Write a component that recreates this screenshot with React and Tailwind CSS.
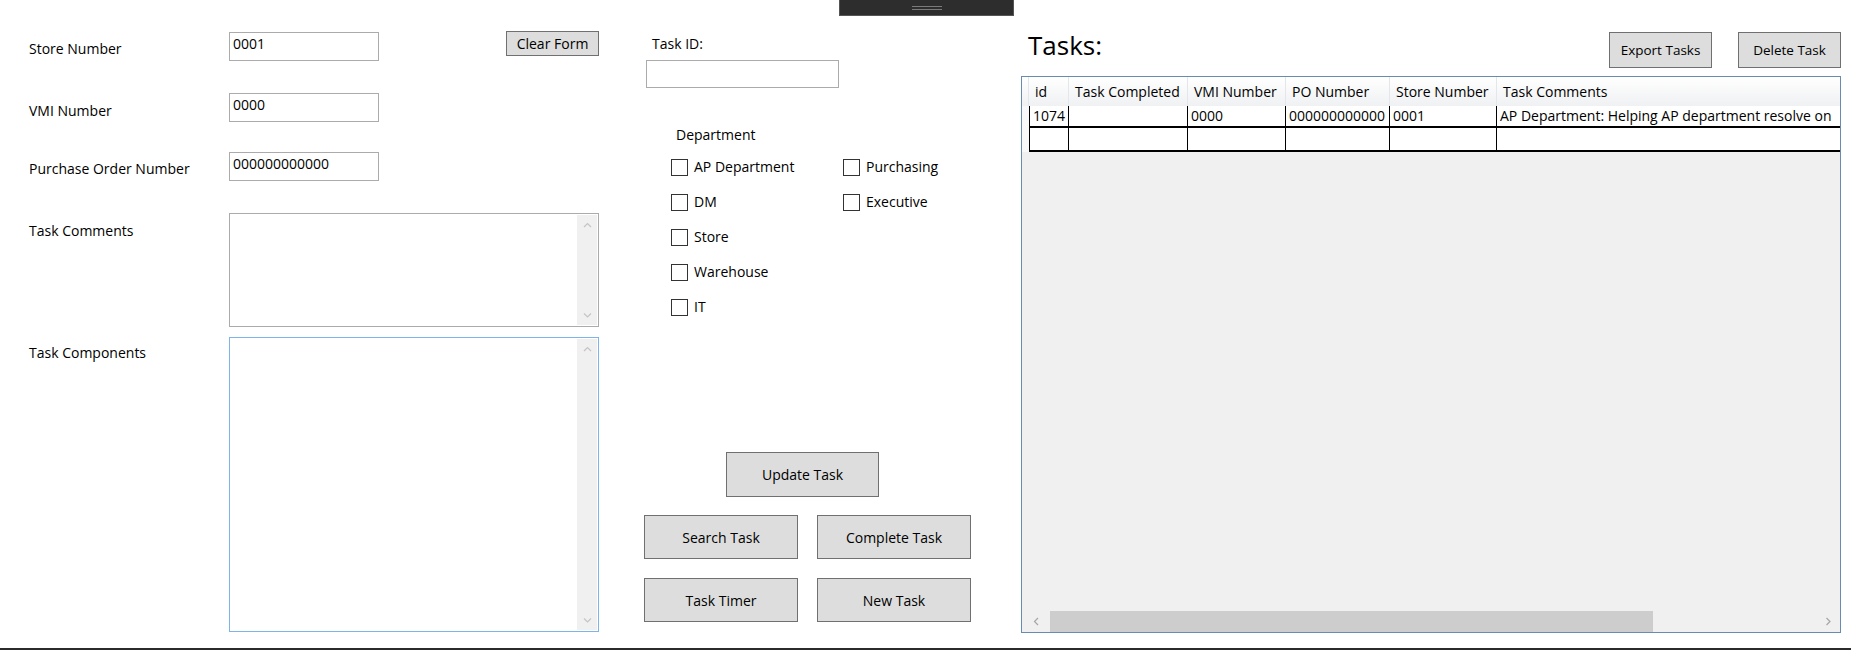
const font = { fontFamily: '"Open Sans", "Noto Sans", sans-serif' }

const Chevron = ({ dir, color = "#c4c4c4" }) => {
    const d = {
        up: "M1 5 L4.5 1.5 L8 5",
        down: "M1 1.5 L4.5 5 L8 1.5",
        left: "M5 1 L1.5 4.5 L5 8",
        right: "M1.5 1 L5 4.5 L1.5 8",
    }[dir]
    const vert = dir === "up" || dir === "down"
    return (
        <svg width={vert ? 9 : 7} height={vert ? 7 : 9} viewBox={vert ? "0 0 9 7" : "0 0 7 9"}>
            <path d={d} fill="none" stroke={color} strokeWidth="1.2" />
        </svg>
    )
}

const TextArea = ({ height, focused }) => (
    <div
        className={`w-[370px] ${height} border ${
            focused ? "border-[#7eb4ea]" : "border-[#ababab]"
        } bg-white flex justify-end p-px`}
    >
        <div className="w-[20px] h-full bg-[#f0f0f0] flex flex-col justify-between">
            <div className="h-[20px] flex items-center justify-center">
                <Chevron dir="up" />
            </div>
            <div className="h-[20px] flex items-center justify-center">
                <Chevron dir="down" />
            </div>
        </div>
    </div>
)

const Input = ({ value, className = "" }) => (
    <div className={`border border-[#ababab] bg-white pl-[3px] pt-[2px] text-[14px] leading-[18px] ${className}`}>
        {value}
    </div>
)

const Button = ({ children, className = "" }) => (
    <button className={`bg-[#dddddd] border border-[#707070] text-black flex items-center justify-center ${className}`}>
        {children}
    </button>
)

const Check = ({ label }) => (
    <div className="flex items-center h-[18px]">
        <div className="w-[17px] h-[17px] border border-[#333333] bg-white"></div>
        <span className="ml-[6px] text-[14px] leading-[18px]">{label}</span>
    </div>
)

const columns = [
    { name: "id", w: "w-[40px]", v: "1074" },
    { name: "Task Completed", w: "w-[119px]", v: "" },
    { name: "VMI Number", w: "w-[98px]", v: "0000" },
    { name: "PO Number", w: "w-[104px]", v: "000000000000" },
    { name: "Store Number", w: "w-[107px]", v: "0001" },
]

const TaskGrid = () => (
    <div className="mt-[8px] h-[557px] border border-[#688caf] bg-[#f0f0f0] flex flex-col overflow-hidden">
        <div className="flex h-[29px] shrink-0 bg-gradient-to-b from-white to-[#f0f1f3] text-[14px] leading-[29px]">
            <div className="w-[7px] shrink-0 border-r border-[#e3e6ea]"></div>
            {columns.map((c) => (
                <div key={c.name} className={`${c.w} shrink-0 border-r border-[#e3e6ea] pl-[6px] whitespace-nowrap`}>
                    {c.name}
                </div>
            ))}
            <div className="flex-1 min-w-0 pl-[6px] whitespace-nowrap">Task Comments</div>
        </div>
        {[0, 1].map((r) => (
            <div key={r} className={`flex shrink-0 ${r === 0 ? "h-[22px]" : "h-[24px]"}`}>
                <div className="w-[7px] shrink-0 bg-[#f9f9f9]"></div>
                <div className="flex-1 min-w-0 flex bg-white border-l border-black border-b-2 border-b-black text-[14px] leading-[20px]">
                    {columns.map((c) => (
                        <div
                            key={c.name}
                            className={`${c.name === "id" ? "w-[39px]" : c.w} shrink-0 border-r border-black pl-[3px] whitespace-nowrap`}
                        >
                            {r === 0 ? c.v : ""}
                        </div>
                    ))}
                    <div className="flex-1 min-w-0 pl-[3px] whitespace-nowrap overflow-hidden">
                        {r === 0 ? "AP Department: Helping AP department resolve on" : ""}
                    </div>
                </div>
            </div>
        ))}
        <div className="flex-1"></div>
        <div className="h-[21px] shrink-0 flex items-center">
            <div className="w-[28px] h-full flex items-center justify-center">
                <Chevron dir="left" color="#a6a6a6" />
            </div>
            <div className="w-[603px] h-full bg-[#cdcdcd]"></div>
            <div className="flex-1"></div>
            <div className="w-[24px] h-full flex items-center justify-center">
                <Chevron dir="right" color="#a6a6a6" />
            </div>
        </div>
    </div>
)

const App = () => {
    return (
        <div className="w-[1851px] h-[650px] bg-white text-black relative overflow-hidden" style={font}>
            <div className="absolute left-[839px] top-0 w-[175px] h-[16px] bg-[#2d2d2d] border border-t-0 border-[#555555] flex flex-col items-center pt-[6px] gap-[2px]">
                <div className="w-[30px] h-px bg-[#7a7a7a]"></div>
                <div className="w-[30px] h-px bg-[#7a7a7a]"></div>
            </div>

            <div className="h-[648px] flex">
                {/* form */}
                <div className="w-[644px] shrink-0 pl-[29px] pt-[32px] text-[14px]">
                    <div className="flex items-start h-[29px]">
                        <div className="w-[200px] pt-[8px] leading-[18px]">Store Number</div>
                        <Input value="0001" className="w-[150px] h-[29px]" />
                        <Button className="ml-[127px] -mt-px w-[93px] h-[25px] text-[14px]">Clear Form</Button>
                    </div>
                    <div className="flex items-start mt-[32px] h-[29px]">
                        <div className="w-[200px] pt-[9px] leading-[18px]">VMI Number</div>
                        <Input value="0000" className="w-[150px] h-[29px]" />
                    </div>
                    <div className="flex items-start mt-[30px] h-[29px]">
                        <div className="w-[200px] pt-[8px] leading-[18px]">Purchase Order Number</div>
                        <Input value="000000000000" className="w-[150px] h-[29px]" />
                    </div>
                    <div className="flex items-start mt-[32px]">
                        <div className="w-[200px] pt-[9px] leading-[18px]">Task Comments</div>
                        <TextArea height="h-[114px]" />
                    </div>
                    <div className="flex items-start mt-[10px]">
                        <div className="w-[200px] pt-[7px] leading-[18px]">Task Components</div>
                        <TextArea height="h-[295px]" focused />
                    </div>
                </div>

                {/* task details */}
                <div className="w-[377px] shrink-0 flex flex-col pt-[35px] pb-[26px]">
                    <div className="ml-[8px] text-[14px] leading-[18px]">Task ID:</div>
                    <Input value="" className="ml-[2px] mt-[7px] w-[193px] h-[28px]" />
                    <div className="ml-[32px] mt-[38px] text-[14px] leading-[18px]">Department</div>
                    <div className="ml-[27px] mt-[14px] flex">
                        <div className="w-[172px] flex flex-col gap-[17px]">
                            <Check label="AP Department" />
                            <Check label="DM" />
                            <Check label="Store" />
                            <Check label="Warehouse" />
                            <Check label="IT" />
                        </div>
                        <div className="flex flex-col gap-[17px]">
                            <Check label="Purchasing" />
                            <Check label="Executive" />
                        </div>
                    </div>
                    <div className="mt-auto text-[14px]">
                        <Button className="ml-[82px] w-[153px] h-[45px]">Update Task</Button>
                        <div className="flex gap-[19px] mt-[18px]">
                            <Button className="w-[154px] h-[44px]">Search Task</Button>
                            <Button className="w-[154px] h-[44px]">Complete Task</Button>
                        </div>
                        <div className="flex gap-[19px] mt-[19px]">
                            <Button className="w-[154px] h-[44px]">Task Timer</Button>
                            <Button className="w-[154px] h-[44px]">New Task</Button>
                        </div>
                    </div>
                </div>

                {/* task list */}
                <div className="w-[820px] shrink-0 pt-[32px]">
                    <div className="flex h-[36px] items-start">
                        <div className="ml-[7px] -mt-[5px] text-[26px] leading-[36px]">Tasks:</div>
                        <div className="ml-auto flex gap-[26px] text-[13.5px]">
                            <Button className="w-[103px] h-[36px]">Export Tasks</Button>
                            <Button className="w-[103px] h-[36px]">Delete Task</Button>
                        </div>
                    </div>
                    <TaskGrid />
                </div>
            </div>
            <div className="h-[2px] bg-[#2b2b2b]"></div>
        </div>
    )
}

export default App
